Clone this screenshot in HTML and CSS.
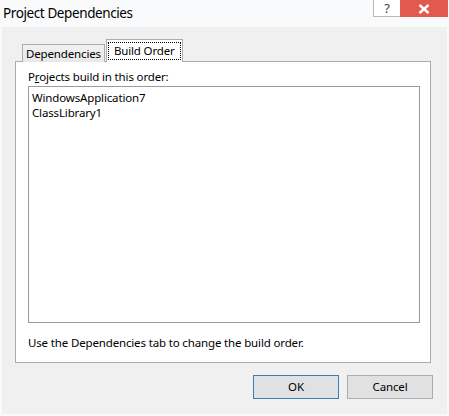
FILE: index.html
```html
<!DOCTYPE html>
<html lang="en">
<head>
    <meta charset="UTF-8">
    <title>Project Dependencies</title>
    <link rel="stylesheet" href="styles.css">
</head>
<body>
    <div class="titlebar">
        <div class="title">Project Dependencies</div>
        <div class="caption-btns">
            <div class="help">?</div>
            <div class="close">
                <svg width="12" height="10" viewBox="0 0 12 10">
                    <path d="M1.5 1 L10.5 9 M10.5 1 L1.5 9" stroke="#fff" stroke-width="2.4"/>
                </svg>
            </div>
        </div>
    </div>

    <div class="dialog">
        <div class="tabs">
            <div class="tab">Dependencies</div>
            <div class="tab active"><span class="focus">Build Order</span></div>
        </div>
        <div class="panel">
            <div class="label">P<u>r</u>ojects build in this order:</div>
            <ul class="listbox">
                <li>WindowsApplication7</li>
                <li>ClassLibrary1</li>
            </ul>
            <div class="note">Use the Dependencies tab to change the build order.</div>
        </div>
        <div class="buttons">
            <div class="btn default">OK</div>
            <div class="btn">Cancel</div>
        </div>
    </div>
</body>
</html>
```

FILE: styles.css
```css
/*初始化*/
body{
    margin: 0;
    background: #f9fafb;
    font-family: "Noto Sans", "Open Sans", sans-serif;
    font-size: 11.5px;
    letter-spacing: -0.15px;
    color: #000;
}
ul,li{
    margin: 0;
    padding: 0;
    list-style: none;
}

/*1.标题栏*/
.titlebar{
    height: 27px;
    display: flex;
    justify-content: space-between;
    align-items: flex-start;
}
.title{
    padding: 3px 0 0 3px;
    font-size: 13.5px;
    letter-spacing: -0.4px;
    line-height: 20px;
}
.caption-btns{
    display: flex;
    margin-right: 1px;
}
.help{
    width: 27px;
    height: 17px;
    background: #fff;
    border-left: 1px solid #b9b9b9;
    border-bottom: 1px solid #b9b9b9;
    box-sizing: border-box;
    text-align: center;
    font-size: 13px;
    line-height: 16px;
    color: #444;
}
.close{
    width: 48px;
    height: 17px;
    background: #e25a4e;
    display: flex;
    align-items: center;
    justify-content: center;
}

/*2.对话框主体*/
.dialog{
    margin: 0 2px;
    height: 387px;
    background: #f0f0f0;
    padding: 11px 16px 0 13px;
    box-sizing: border-box;
}

/*3.选项卡*/
.tabs{
    display: flex;
    align-items: flex-end;
    margin-left: 7px;
    height: 23px;
}
.tab{
    height: 17px;
    padding: 0 3px;
    line-height: 18px;
    border: 1px solid #acacac;
    border-bottom: none;
    background: linear-gradient(#f2f2f2, #e8e8e8);
    position: relative;
    top: 1px;
}
.tab.active{
    height: 22px;
    padding: 0 1px;
    background: #fff;
    margin-left: 1px;
    z-index: 1;
}
.focus{
    display: block;
    margin-top: 2px;
    padding: 0 5px;
    line-height: 16px;
    border: 1px dotted #000;
}

/*4.内容面板*/
.panel{
    height: 293px;
    border: 1px solid #acacac;
    background: #fff;
    padding: 7px 0 0 12px;
}
.label{
    line-height: 16px;
}
.listbox{
    width: 392px;
    height: 237px;
    box-sizing: border-box;
    margin-top: 1px;
    border: 1px solid #9b9b9b;
    padding: 3px 3px;
}
.listbox li{
    line-height: 15px;
}
.note{
    margin-top: 12px;
    line-height: 16px;
}

/*5.按钮*/
.buttons{
    display: flex;
    justify-content: flex-end;
    gap: 8px;
    margin-top: 12px;
    margin-right: -2px;
}
.btn{
    width: 84px;
    height: 22px;
    line-height: 22px;
    text-align: center;
    border: 1px solid #adadad;
    background: #e1e1e1;
}
.btn.default{
    border-color: #3c7fb1;
}
```
